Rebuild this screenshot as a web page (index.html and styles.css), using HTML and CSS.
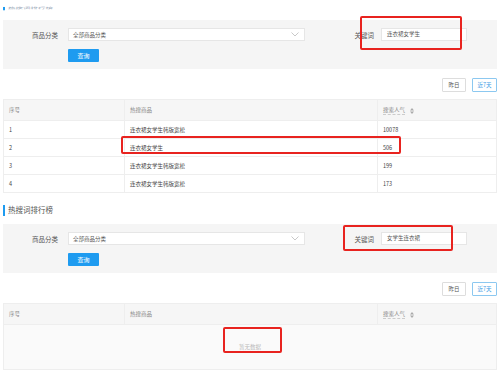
FILE: index.html
```html
<!DOCTYPE html>
<html lang="zh-CN">
<head>
  <meta charset="UTF-8">
  <meta name="viewport" content="width=device-width, initial-scale=1.0">
  <title>热搜词排行榜</title>
  <link rel="stylesheet" href="styles.css">
</head>
<body>
  <div class="page">

    <!-- section 1 -->
    <div class="section-title faded">热搜词排行榜</div>
    <div class="filter">
      <div class="filter-row">
        <label class="label">商品分类</label>
        <div class="select">
          <span>全部商品分类</span>
          <svg class="chev" width="8" height="5" viewBox="0 0 8 5"><path d="M0.5 0.5 L4 4 L7.5 0.5" fill="none" stroke="#bbb" stroke-width="0.8"/></svg>
        </div>
        <div class="kw">
          <label class="label kw-label">关键词</label>
          <div class="input">连衣裙女学生</div>
          <div class="mark mark-kw1"></div>
        </div>
      </div>
      <button class="btn-query">查询</button>
    </div>

    <div class="range">
      <button class="btn-range">昨日</button>
      <button class="btn-range active">近7天</button>
    </div>

    <div class="table-wrap">
      <table class="rank">
        <thead>
          <tr>
            <th class="col-no">序号</th>
            <th class="col-name">热搜商品</th>
            <th class="col-hot"><span class="dashed">搜索人气</span>
              <svg class="sort" width="4" height="6" viewBox="0 0 4 6"><path d="M2 0 L4 2.4 H0 Z M2 6 L0 3.6 H4 Z" fill="#aaa"/></svg>
            </th>
          </tr>
        </thead>
        <tbody>
          <tr><td>1</td><td>连衣裙女学生韩版宽松</td><td>10078</td></tr>
          <tr><td>2</td><td>连衣裙女学生</td><td>506</td></tr>
          <tr><td>3</td><td>连衣裙女学生韩版宽松</td><td>199</td></tr>
          <tr><td>4</td><td>连衣裙女学生韩版宽松</td><td>173</td></tr>
        </tbody>
      </table>
      <div class="mark mark-row"></div>
    </div>

    <!-- section 2 -->
    <div class="section-title">热搜词排行榜</div>
    <div class="filter">
      <div class="filter-row">
        <label class="label">商品分类</label>
        <div class="select">
          <span>全部商品分类</span>
          <svg class="chev" width="8" height="5" viewBox="0 0 8 5"><path d="M0.5 0.5 L4 4 L7.5 0.5" fill="none" stroke="#bbb" stroke-width="0.8"/></svg>
        </div>
        <div class="kw">
          <label class="label kw-label">关键词</label>
          <div class="input">女学生连衣裙</div>
          <div class="mark mark-kw2"></div>
        </div>
      </div>
      <button class="btn-query">查询</button>
    </div>

    <div class="range">
      <button class="btn-range">昨日</button>
      <button class="btn-range active">近7天</button>
    </div>

    <div class="table-wrap">
      <table class="rank">
        <thead>
          <tr>
            <th class="col-no">序号</th>
            <th class="col-name">热搜商品</th>
            <th class="col-hot"><span class="dashed">搜索人气</span>
              <svg class="sort" width="4" height="6" viewBox="0 0 4 6"><path d="M2 0 L4 2.4 H0 Z M2 6 L0 3.6 H4 Z" fill="#aaa"/></svg>
            </th>
          </tr>
        </thead>
        <tbody>
          <tr><td class="empty" colspan="3">暂无数据</td></tr>
        </tbody>
      </table>
      <div class="mark mark-empty"></div>
    </div>

  </div>
</body>
</html>
```

FILE: styles.css
```css
body {
  margin: 0;
  background-color: #fff;
  font-family: "Noto Sans CJK SC", "Noto Sans", sans-serif;
  color: #555;
}

.page {
  padding: 0 3px;
}

.section-title {
  position: relative;
  height: 14px;
  line-height: 14px;
  margin: 10px 0 7px;
  padding-left: 5px;
  font-size: 7.5px;
  color: #555;
}

.section-title::before {
  content: "";
  position: absolute;
  left: 0;
  top: 2px;
  width: 2px;
  height: 11px;
  background-color: #1e9bf0;
}

.section-title.faded {
  margin: 0 0 6px;
  color: #9aa7b8;
  transform: scaleY(0.3);
  transform-origin: 50% 65%;
}

.filter {
  background-color: #f5f5f5;
  padding: 8px 0 7px;
}

.filter-row {
  display: flex;
  align-items: center;
  height: 13px;
}

.label {
  width: 55px;
  margin-right: 10px;
  text-align: right;
  font-size: 6.5px;
  color: #555;
}

.select {
  width: 237px;
  height: 13px;
  box-sizing: border-box;
  border: 1px solid #e6e6e6;
  background-color: #fff;
  display: flex;
  align-items: center;
  justify-content: space-between;
  padding: 0 5px 0 4px;
  font-size: 5.5px;
  color: #555;
}

.kw {
  position: relative;
  display: flex;
  align-items: center;
  margin-left: 49px;
}

.kw-label {
  width: 20px;
  margin-right: 7px;
}

.input {
  width: 86px;
  height: 13px;
  box-sizing: border-box;
  border: 1px solid #e6e6e6;
  background-color: #fff;
  padding-left: 5px;
  font-size: 5.5px;
  line-height: 11px;
  color: #555;
}

.btn-query {
  display: block;
  margin: 8px 0 0 65px;
  width: 31px;
  height: 13px;
  padding: 0;
  border: none;
  border-radius: 1px;
  background-color: #1e9bf0;
  color: #fff;
  font-family: inherit;
  font-size: 6px;
}

.range {
  display: flex;
  justify-content: flex-end;
  gap: 6px;
  margin: 9px 0 7px;
}

.btn-range {
  width: 24px;
  height: 14px;
  padding: 0;
  border: 1px solid #ddd;
  border-radius: 1px;
  background-color: #fff;
  color: #555;
  font-family: inherit;
  font-size: 5.5px;
}

.btn-range.active {
  width: 25px;
  border-color: #8cc8f0;
  color: #3a9be5;
}

.table-wrap {
  position: relative;
}

.rank {
  width: 100%;
  border-collapse: collapse;
  table-layout: fixed;
  font-size: 5.5px;
}

.rank th {
  height: 20px;
  background-color: #f6f6f6;
  color: #888;
  font-weight: normal;
  text-align: left;
  padding: 0 0 0 5px;
  border: 1px solid #eee;
}

.rank td {
  height: 17px;
  padding: 0 0 0 5px;
  border: 1px solid #eee;
  color: #444;
}

.col-no {
  width: 115px;
}

.col-name {
  width: 247px;
}

.dashed {
  border-bottom: 1px dashed #ccc;
}

.sort {
  margin-left: 4px;
  vertical-align: middle;
}

.rank td.empty {
  height: 44px;
  padding: 0;
  text-align: center;
  background-color: #fafafa;
  color: #bbb;
}

.mark {
  position: absolute;
  border: 2px solid #e8231f;
  border-radius: 2px;
  box-sizing: border-box;
}

.mark-kw1 {
  left: 6px;
  top: -12px;
  width: 102px;
  height: 34px;
}

.mark-kw2 {
  left: -11px;
  top: -7px;
  width: 110px;
  height: 26px;
}

.mark-row {
  left: 118px;
  top: 37px;
  width: 280px;
  height: 18px;
}

.mark-empty {
  left: 220px;
  top: 24px;
  width: 59px;
  height: 26px;
}
```
